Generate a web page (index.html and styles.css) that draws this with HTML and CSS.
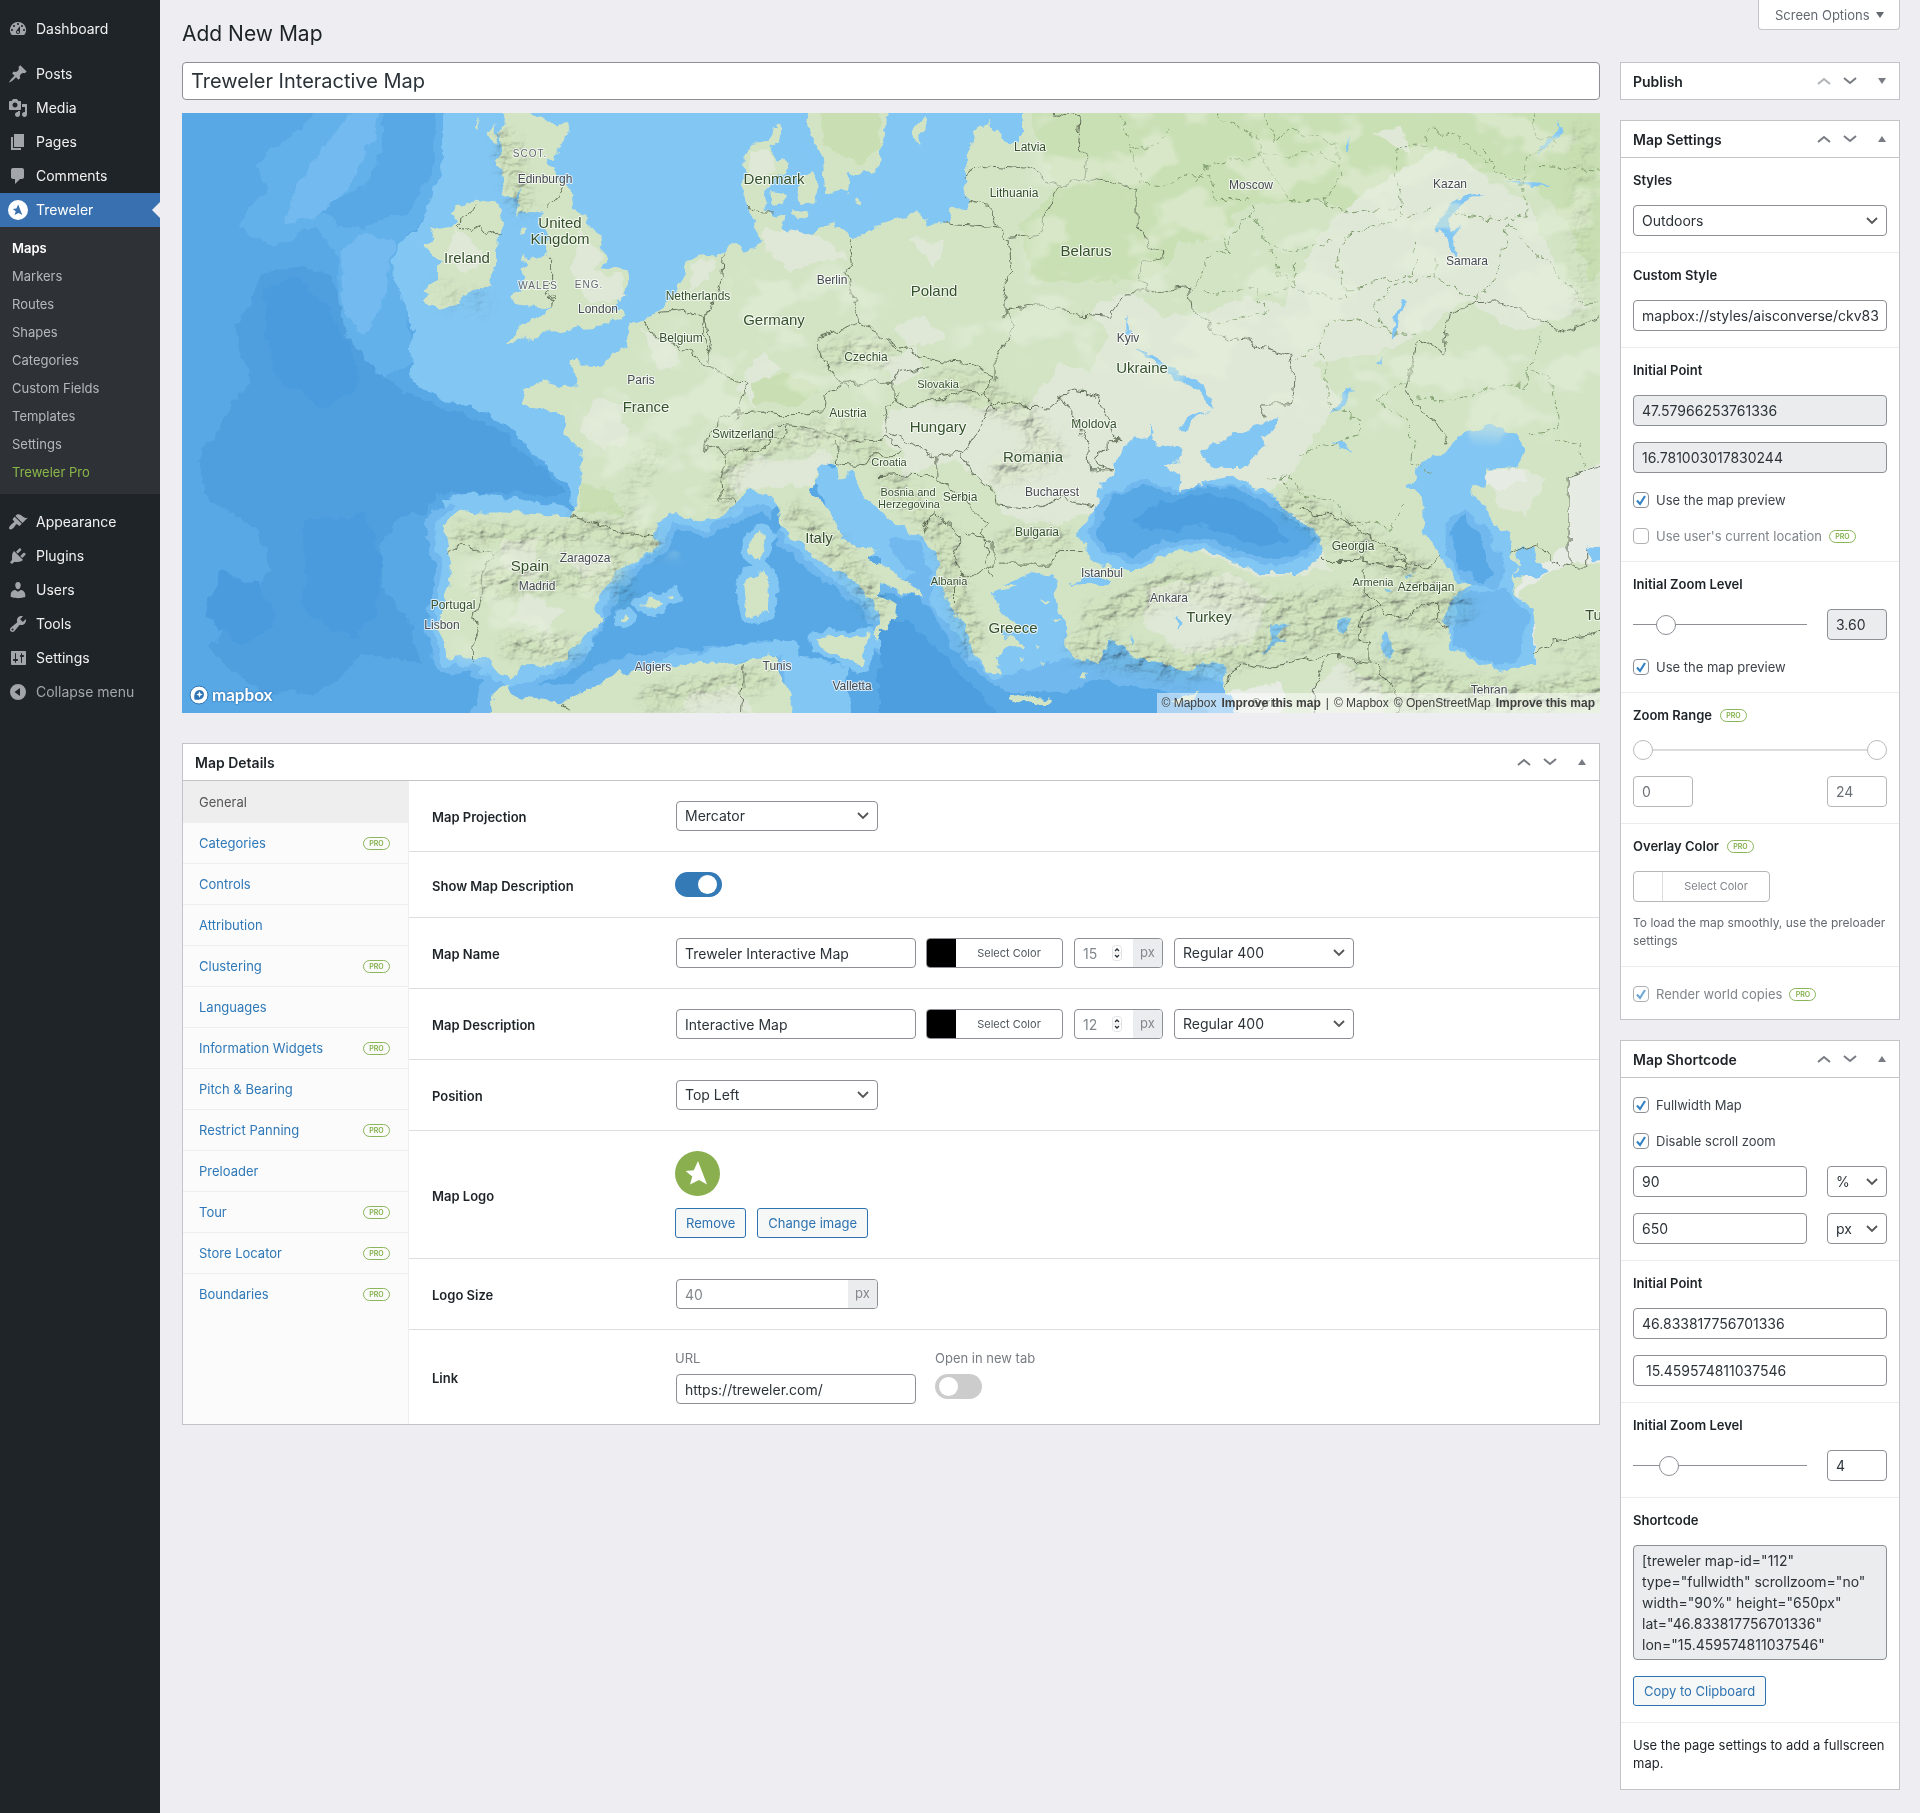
FILE: index.html
```html
<!DOCTYPE html>
<html lang="en">
<head>
<meta charset="utf-8">
<meta name="viewport" content="width=device-width, initial-scale=1">
<title>Add New Map</title>
<link rel="stylesheet" href="styles.css">
</head>
<body>
<svg class="defs" aria-hidden="true">
  <symbol id="up" viewBox="0 0 14 8"><path d="M1 7l6-5 6 5" fill="none" stroke="currentColor" stroke-width="2"/></symbol>
  <symbol id="down" viewBox="0 0 14 8"><path d="M1 1l6 5 6-5" fill="none" stroke="currentColor" stroke-width="2"/></symbol>
  <symbol id="tri-up" viewBox="0 0 8 8"><path d="M4 1l4 6H0z" fill="currentColor"/></symbol>
  <symbol id="tri-down" viewBox="0 0 8 8"><path d="M4 7l4-6H0z" fill="currentColor"/></symbol>
  <symbol id="star" viewBox="0 0 45 45"><path d="M23 10l9 23.5-8-4.5-9 4.5 2.300-8-6.700-5.500 8.200-.7z"/></symbol>
  <symbol id="spin" viewBox="0 0 10 16"><rect x=".5" y=".5" width="9" height="15" rx="3" fill="#fff" stroke="#e2e2e4"/><path d="M1 8h8" stroke="#e2e2e4"/><path d="M3 6l2-2 2 2M3 10l2 2 2-2" fill="none" stroke="#2c3338" stroke-width="1.300"/></symbol>
</svg>
<div class="layout">
  <nav class="menu" aria-label="Main menu">
    <ul class="menu-list">
      <li><a href="#" class="item"><svg viewBox="0 0 20 20"><path d="M3.760 16h12.480A7.998 7.998 0 0 0 10 3a7.998 7.998 0 0 0-6.240 13zM10 4c.55 0 1 .45 1 1s-.45 1-1 1-1-.45-1-1 .45-1 1-1zM6 6c.55 0 1 .45 1 1s-.45 1-1 1-1-.45-1-1 .45-1 1-1zm8 0c.55 0 1 .45 1 1s-.45 1-1 1-1-.45-1-1 .45-1 1-1zm-5.370 5.550L12 7v6c0 1.100-.9 2-2 2s-2-.9-2-2c0-.57.24-1.080.63-1.450zM4 10c.55 0 1 .45 1 1s-.45 1-1 1-1-.45-1-1 .45-1 1-1zm12 0c.55 0 1 .45 1 1s-.45 1-1 1-1-.45-1-1 .45-1 1-1zm-5 3c0-.55-.45-1-1-1s-1 .45-1 1 .45 1 1 1 1-.45 1-1z"/></svg>Dashboard</a></li>
      <li class="split"><a href="#" class="item"><svg viewBox="0 0 20 20"><path d="M10.440 3.020l1.820-1.820 6.360 6.350-1.830 1.820c-1.050-.68-2.480-.57-3.410.36l-.75.75c-.92.93-1.040 2.350-.35 3.410l-1.830 1.820-2.410-2.410-2.800 2.790c-.42.42-3.380 2.710-3.800 2.290s1.860-3.390 2.280-3.810l2.790-2.790L4.100 9.360l1.830-1.820c1.050.69 2.480.57 3.400-.36l.75-.75c.93-.92 1.050-2.350.36-3.410z"/></svg>Posts</a></li>
      <li><a href="#" class="item"><svg viewBox="0 0 20 20"><path d="M13 11V4c0-.55-.45-1-1-1h-1.670L9 1H5L3.670 3H2c-.55 0-1 .45-1 1v7c0 .55.45 1 1 1h10c.55 0 1-.45 1-1zM7 4.500c1.380 0 2.500 1.120 2.500 2.500S8.380 9.500 7 9.500 4.500 8.380 4.500 7 5.620 4.500 7 4.500zM14 6h5v10.500c0 1.380-1.120 2.500-2.500 2.500S14 17.880 14 16.500s1.120-2.500 2.500-2.500c.17 0 .34.02.5.05V9h-3V6zm-4 8.050V13h2v3.500c0 1.380-1.120 2.500-2.500 2.500S7 17.880 7 16.500 8.120 14 9.500 14c.17 0 .34.02.5.05z"/></svg>Media</a></li>
      <li><a href="#" class="item"><svg viewBox="0 0 20 20"><path d="M6 15V2h10v13H6zm-1 1h8v2H3V5h2v11z"/></svg>Pages</a></li>
      <li><a href="#" class="item"><svg viewBox="0 0 20 20"><path d="M5 2h9c1.100 0 2 .9 2 2v7c0 1.100-.9 2-2 2h-2l-5 5v-5H5c-1.100 0-2-.9-2-2V4c0-1.100.9-2 2-2z"/></svg>Comments</a></li>
      <li>
        <a href="#" class="item current"><svg viewBox="0 0 45 45"><circle cx="22.5" cy="22.5" r="22.5" fill="#fff"/><use href="#star" fill="#3a72b0"/></svg>Treweler</a>
        <ul class="submenu">
          <li><a href="#" class="sub-current">Maps</a></li>
          <li><a href="#">Markers</a></li>
          <li><a href="#">Routes</a></li>
          <li><a href="#">Shapes</a></li>
          <li><a href="#">Categories</a></li>
          <li><a href="#">Custom Fields</a></li>
          <li><a href="#">Templates</a></li>
          <li><a href="#">Settings</a></li>
          <li><a href="#" class="sub-pro">Treweler Pro</a></li>
        </ul>
      </li>
      <li class="split"><a href="#" class="item"><svg viewBox="0 0 20 20"><path d="M14.480 11.060L7.410 3.990l1.500-1.500c.5-.56 2.300-.47 3.510.32 1.210.8 1.430 1.280 2.910 2.100 1.180.64 2.450 1.260 4.450.85zm-.71.71L6.700 4.700 4.930 6.470c-.39.39-.39 1.020 0 1.410l1.060 1.060c.39.39.39 1.030 0 1.420-.6.6-1.430 1.110-2.210 1.690-.35.26-.7.53-1.010.84C1.430 14.230.4 16.080 1.400 17.070c.99 1 2.840-.03 4.180-1.360.31-.31.58-.66.85-1.020.57-.78 1.080-1.610 1.690-2.210.39-.39 1.020-.39 1.410 0l1.060 1.060c.39.39 1.020.39 1.410 0z"/></svg>Appearance</a></li>
      <li><a href="#" class="item"><svg viewBox="0 0 20 20"><path d="M13.110 4.360L9.870 7.600 8 5.730l3.240-3.240c.35-.34 1.050-.2 1.560.32.52.51.66 1.210.31 1.550zm-8 1.770l.91-1.120 9.010 9.010-1.190.84c-.71.71-2.630 1.160-3.820 1.160H6.140L4.900 17.260c-.59.59-1.540.59-2.120 0-.59-.58-.59-1.530 0-2.120l1.240-1.240v-3.880c0-1.130.4-3.190 1.090-3.890zm7.260 3.970l3.240-3.240c.34-.35 1.040-.21 1.550.31.52.51.66 1.210.31 1.550l-3.240 3.250z"/></svg>Plugins</a></li>
      <li><a href="#" class="item"><svg viewBox="0 0 20 20"><path d="M10 9.250c-2.270 0-2.730-3.440-2.730-3.440C7 4.020 7.820 2 9.970 2c2.160 0 2.980 2.020 2.710 3.810 0 0-.41 3.440-2.680 3.440zm0 2.570L12.720 10c2.390 0 4.520 2.330 4.520 4.530v2.490s-3.650 1.130-7.240 1.130c-3.650 0-7.240-1.130-7.240-1.130v-2.490c0-2.250 1.940-4.480 4.470-4.480z"/></svg>Users</a></li>
      <li><a href="#" class="item"><svg viewBox="0 0 20 20"><path d="M16.680 9.770c-1.340 1.340-3.300 1.670-4.950.99l-5.410 6.520c-.99.99-2.590.99-3.580 0s-.99-2.590 0-3.570l6.520-5.420c-.68-1.650-.35-3.610.99-4.950 1.280-1.280 3.120-1.620 4.720-1.060l-2.890 2.890 2.820 2.820 2.860-2.870c.53 1.580.18 3.390-1.080 4.650zM3.810 16.210c.4.39 1.040.39 1.430 0 .4-.4.4-1.040 0-1.430-.39-.4-1.030-.4-1.430 0-.39.39-.39 1.030 0 1.430z"/></svg>Tools</a></li>
      <li><a href="#" class="item"><svg viewBox="0 0 20 20"><path d="M18 16V4c0-.55-.45-1-1-1H4c-.55 0-1 .45-1 1v12c0 .55.45 1 1 1h13c.55 0 1-.45 1-1zM8 11h1c.55 0 1 .45 1 1s-.45 1-1 1H8v1.500c0 .28-.22.5-.5.5s-.5-.22-.5-.5V13H6c-.55 0-1-.45-1-1s.45-1 1-1h1V5.500c0-.28.22-.5.5-.5s.5.22.5.5V11zm6-2h-1c-.55 0-1-.45-1-1s.45-1 1-1h0V5.500c0-.28.22-.5.5-.5s.5.22.5.5V7h1c.55 0 1 .45 1 1s-.45 1-1 1h-1v5.500c0 .28-.22.5-.5.5s-.5-.22-.5-.5V9z"/></svg>Settings</a></li>
      <li><button type="button" class="item collapse"><svg viewBox="0 0 20 20"><path fill-rule="evenodd" d="M10 2a8 8 0 1 0 0 16 8 8 0 0 0 0-16zm2 4v8l-5.500-4z"/></svg>Collapse menu</button></li>
    </ul>
  </nav>

  <div class="content">
    <main class="main">
      <h1 class="page-title">Add New Map</h1>
      <input class="title-input" type="text" value="Treweler Interactive Map" aria-label="Map title">

      <div class="map">
        <svg class="map-art" viewBox="0 0 1418 600" preserveAspectRatio="xMidYMid slice" role="img" aria-label="Map of Europe">
          <defs>
            <filter id="rough" filterUnits="userSpaceOnUse" x="-30" y="-30" width="1480" height="660">
              <feTurbulence type="fractalNoise" baseFrequency=".07" numOctaves="3" seed="4" result="n"/>
              <feDisplacementMap in="SourceGraphic" in2="n" scale="13" xChannelSelector="R" yChannelSelector="G"/>
            </filter>
            <filter id="hill" filterUnits="userSpaceOnUse" x="0" y="0" width="1418" height="600">
              <feTurbulence type="fractalNoise" baseFrequency=".06 .09" numOctaves="4" seed="9" result="n"/>
              <feDiffuseLighting in="n" surfaceScale="9" diffuseConstant="1.150" lighting-color="#eef4dc" result="l"><feDistantLight azimuth="225" elevation="55"/></feDiffuseLighting>
              <feGaussianBlur in="SourceAlpha" stdDeviation="6" result="b"/>
              <feComposite in="l" in2="b" operator="in"/>
            </filter>
            <filter id="patch" filterUnits="userSpaceOnUse" x="0" y="0" width="1418" height="600">
              <feTurbulence type="fractalNoise" baseFrequency=".018 .025" numOctaves="3" seed="21" result="n"/>
              <feColorMatrix in="n" type="matrix" values="0 0 0 0 .78  0 0 0 0 .87  0 0 0 0 .7  9 0 0 0 -4.600" result="c"/>
              <feGaussianBlur in="SourceAlpha" stdDeviation="8" result="b"/>
              <feComposite in="c" in2="b" operator="in"/>
            </filter>
            <clipPath id="cl"><path d="M-30-30H698V640H-30z"/></clipPath>
            <clipPath id="cr"><path d="M698-30H1460V640H698z"/></clipPath>
            <path id="uk" d="M700-40L780-40 770 15 800 35 848 40 840 75 815 115 800 135 818 150 830 190 852 205 858 240 875 275 905 305 918 345 928 385 915 410 940 405 975 412 980 440 960 485 940 510 968 520 965 535 930 555 880 560 830 568 790 570 770 598 745 585 725 600 705 608 730 575 745 548 790 530 805 515 760 505 720 485 745 465 755 430 740 412 755 395 745 372 775 385 800 370 805 325 785 290 790 265 760 258 730 270 735 230 745 200 725 225 705 215 712 180 690 140 700 110 695 60 705 30zM640 228L690 235 708 285 690 320 688 400 675 455 630 470 600 495 560 510 530 490 545 470 525 460 560 435 555 400 575 390 545 375 535 350 555 335 540 310 590 300 610 280 590 270 605 240zM672 60l12-20 10 30-8 20zM640 50l8-30v40zM745 300l8 4-6 16-8-4z"/>
            <path id="eu" d="M1310 35L1308 75 1290 95 1300 120 1325 140 1318 160 1290 185 1275 215 1270 250 1290 268 1320 275 1310 300 1325 320 1350 320 1385 315 1410 290 1440 305 1465 330 1490 320 1530 295 1700 275 1700 1060 1560 1050 1525 1030 1490 1000 1480 960 1465 925 1450 955 1435 950 1430 905 1410 900 1380 925 1385 950 1375 985 1400 1010 1425 1050 1440 1100 1475 1130 1520 1135 1500 1150 1530 1175 1700 1190 1700 1240 1545 1225 1560 1305 1540 1340 1515 1365 1505 1350 1525 1320 1515 1265 1490 1250 1480 1220 1440 1190 1400 1165 1370 1140 1330 1095 1310 1070 1305 1020 1270 985 1245 980 1215 1010 1195 1030 1170 1055 1135 1060 1100 1045 1065 1040 1035 1060 1030 1095 1040 1115 1010 1150 950 1180 930 1220 905 1270 905 1290 920 1320 885 1345 865 1380 840 1410 800 1430 745 1430 715 1465 690 1450 675 1420 640 1405 585 1412 580 1370 560 1325 565 1300 585 1240 590 1180 580 1110 570 1070 610 1030 640 1035 700 1035 790 1040 850 1045 865 1000 875 950 873 910 875 870 840 830 835 790 800 770 750 755 740 715 790 700 830 710 862 705 858 670 848 640 870 640 880 660 920 660 945 625 975 600 980 550 1040 520 1075 480 1095 430 1110 385 1180 370 1190 350 1220 350 1230 370 1265 335 1250 300 1235 250 1225 215 1230 110 1245 85 1280 80 1300 40z"/>
            <path id="isl" d="M1360-40L1372 70 1400 130 1405 210 1450 215 1455 170 1510 155 1535 100 1545-40zM1288 208l26 5 4 30-14 8-14-18zM1338 205l14-10-2-25 26-10 16 30-10 25 2 25-28 2zM1335 258l30 2-5 14-24-3zM1470 230l14 4-2 14-10-6zM1412 280l16 8-6 18-14-8zM1270 1080L1274 1130 1260 1160 1242 1140 1240 1105zM1265 1178L1283 1200 1280 1290 1240 1305 1232 1260 1228 1205zM1388 1358L1430 1355 1500 1348 1485 1432 1430 1400 1388 1378zM1005 1270L1032 1252 1047 1268 1035 1286zM1060 1246l16-2 2 10-10 2zM960 1305l12-8 4 10-12 8z"/>
            <path id="af" d="M660 1620L690 1490 715 1480 740 1510 830 1520 880 1500 920 1470 960 1445 1060 1430 1100 1425 1160 1420 1230 1420 1270 1400 1310 1410 1300 1440 1330 1500 1320 1620z"/>
          </defs>
          <g filter="url(#rough)">
            <rect x="-40" y="-40" width="1500" height="690" fill="#58a8e5"/>
            <g clip-path="url(#cl)">
              <g transform="translate(-2 -3) scale(.4592 .389)">
                <path fill="#4f9fdf" d="M180 420L260 400 330 430 370 560 420 650 440 690 560 760 680 810 750 880 800 930 840 990 560 985 540 1040 480 1040 440 1100 440 1240 500 1300 520 1420 400 1400 300 1500 180 1500 60 1380 130 1300 200 1180 170 1080 60 1000 40 900 150 700 120 560z"/>
                <path fill="#64b1ea" d="M330-40L590-40 575 160 520 300 480 340 470 420 490 520 510 640 440 690 370 590 345 500 345 380 300 300 200 350 130 300 190 200 160 140 250 60z"/>
                <path fill="#58a8e5" d="M440-40L560-40 550 150 500 260 400 300 340 300 300 250 400 200 440 100z"/>
                <path fill="#4a9bde" d="M270 1060l130-20 40 110-10 150-60 60-100-70zM180 460l60-30 70 60 60 110 20 110-80 60-110-90zM90 1180l80 40 40 100-80 60-80-90z"/>
                <path fill="#72baef" d="M370 10l60-20-10 90-60 130-60 60-70 20 20-90 60-100zM400 310l65 30-10 110-50 130-50-60-5-150z"/>
                <path fill="#82c6f4" d="M575-40V130L545 230 520 310 470 345 465 420 490 520 505 570 500 690 560 740 640 765 720 820 760 870 800 925 845 960 860 1050 1000 1000 1400 900 1700 800 1700-40zM570 1000l60-15 100 15 110 20 40 60-320-10z"/>
                <g fill="none" stroke-linejoin="round" stroke="#6fb8ee" stroke-width="76"><use href="#af"/></g>
                <g fill="none" stroke-linejoin="round" stroke="#82c6f4"><path stroke="#6fb8ee" stroke-width="70" d="M1305 1020L1270 985 1195 1030 1135 1060 1065 1040 1035 1110 950 1180 905 1280 840 1410 715 1465 640 1405 585 1412 570 1320 590 1180 570 1070 610 1030M1310 1070L1400 1165 1500 1250 1560 1340 1505 1365M1290 1060"/><path stroke-width="36" d="M1305 1020L1270 985 1195 1030 1135 1060 1065 1040 1035 1110 950 1180 905 1280 880 1370 840 1410 715 1465 640 1405 585 1412 570 1320 590 1180 570 1070 610 1030M1310 1070L1400 1165 1500 1250 1560 1340 1505 1365M1030 1430L1330 1380 1340 1560"/><use href="#isl" stroke-width="34"/></g>
                <path fill="#82c6f4" d="M1370 900L1460 920 1580 1040 1580 1160 1440 1130z"/>
                <path fill="#82c6f4" d="M1330 1400L1450 1430 1460 1560H1320z"/>
                <g fill="#d3e4c5"><use href="#uk"/><use href="#eu"/><use href="#isl"/><use href="#af"/></g>
                <g fill="#dfe8d6">
                  <path d="M1200 920L1260 890 1340 905 1410 870 1425 895 1380 925 1380 970 1290 965 1215 985 1195 950zM700 1110L780 1100 770 1160 800 1180 760 1220 700 1170zM750 1240l90 40-40 60-80-30zM840 1150l90-10 20 30-70 40zM900 740l60 20 20 90-60 30-50-60zM1000 560l70 40 20 50-50 20zM870 310l50 60-20 40 60 20 10 50-80 20-40-90zM1270 300l120 20 60 60-120 30-60-50zM1120 400l50-20-20 60-40 20zM1210 720l60-100 40 40-50 100zM1240 100l50 10 10 50-60 20zM1100 1500l120-20 30 70h-160zM600 300l70 80-50 40-40-30z"/>
                </g>
                <path fill="#c9dfb3" d="M875 960l70 20 20 60-100-10zM1390-40h150v130l-60 50-80-50zM1240 700l80-20 80 30-60 50-90-10z"/>
              </g>
            </g>
            <g clip-path="url(#cr)">
              <g transform="translate(698 -3) scale(.4656 .389)">
                <path fill="#d3e4c5" d="M-40-60H1640V1650H-40z"/>
                <path fill="#c9dfb4" d="M300-60H1640V300L1530 440 1480 300 1400 180 1250 150 1130 230 1010 270 960 230 780 240 740 330 640 340 620 400 560 440 330 440 300 300 380 200z"/>
                <g fill="#dfe8d6">
                  <path d="M1190 100l60 20 60 60 80 60 70 180 60 90-150 60-110-80-120 100-90 40-120 20 60 100-50 80-60 120-60 40 90 60 60 130-150 20-130-60-20-100-60 30-80-60-120 40-100-30-90-60-60-60-110 40-20-160 140-20 140 10 80-120 60 20 40-90-40-60 80-60 80 70 110-10 60-40 80 20 90-180 60-80z"/>
                  <path d="M20 770l160-20 50 30-60 90-120 20-50-60zM250 980l170 10 40 20-80 60-120-30zM1300 930l90-10 40 30-40 90-60-20zM570 1230l180-40 90 60-40 120-140 30-90-70zM930 1480l60-60 90 60 10 120-170 10zM1060 60l60-20 20 80zM30 560l60-30 50 60-80 20zM60 330l80 10-20 60zM0 650l80-40 10 60-60 40z"/>
                </g>
                <path fill="#e6ebe4" d="M1480 940l90-40v270l-90-10-80 60-30 20 40 90-5 100-20-110-20-90 40-50 75-60zM1310 925l70 0 10 30-60 20-30-20zM740 1500l120-30 20 60-60 60h-90z"/>
                <g fill="#82c6f4">
                  <path d="M-40-60H305V85L275 92 260 70 235 30 205 50 185 120 185 190 190 250 150 255 140 290 105 300 90 265 45 270-40 310z"/>
                  <path d="M545 845L580 840 610 870 650 875 645 900 610 915 640 940 650 980 700 955 760 935 790 960 840 985 880 1040 930 1080 950 1120 940 1160 890 1190 820 1190 760 1165 700 1130 640 1135 600 1150 560 1180 500 1180 460 1160 440 1120 425 1095 440 1050 465 1020 470 960 500 940 510 890zM695 870L760 840 800 810 855 800 855 815 815 845 830 870 805 890 795 920 740 920 710 915 695 895z"/>
                  <path d="M1310 810L1375 825 1380 880 1365 920 1305 925 1300 970 1270 970 1305 1040 1330 1080 1360 1090 1350 1140 1370 1170 1360 1240 1400 1280 1405 1330 1405 1425 1330 1440 1270 1410 1225 1380 1215 1310 1235 1240 1270 1220 1240 1210 1200 1140 1170 1080 1165 1010 1135 970 1165 905 1220 880 1240 840zM1370 1125L1405 1120 1410 1160 1435 1190 1410 1205 1370 1200zM1520 1120l40 0v40h-30z"/>
                  <path d="M-40 1010L0 1030 40 1065 90 1100 120 1140 125 1200 140 1260 170 1310 195 1350 190 1380 230 1440 255 1450 250 1410 270 1385 290 1370 265 1345 310 1340 260 1290 240 1240 290 1230 270 1215 320 1195 370 1190 385 1215 375 1240 380 1290 400 1330 400 1380 440 1430 480 1450 530 1460 550 1430 600 1460 640 1465 690 1420 740 1425 745 1450 725 1520 725 1620-40 1620zM400 1215l30-5 30-18 40 12-10 16-70 0z"/>
                  <path d="M1195 300l20-50 40-35 45-2-45 20-30 40 0 40 25-10-20 30 10 40-15-5-5-30zM1120 490l12 0-14 30-5 60-12 10 5-60zM1082 630l-6 30-8-4zM1015 710l-15 50-30 20 20-40 8-25zM965 848l25 5 25 24-30-14zM1340 180l70 4 30 12-50-4zM1410 100l30-30 20-40 4 30-30 30-20 25zM1003 60l8 45-8 0zM528 530l10 40-8 10zM545 605l20 10 80 60 40 15 30 60-5 22-20-45-40-25-80-70zM640 830l20-45 50-8-30 15-30 40zM580 800l8 40-8 0zM1078 1350l10-5 15 45-15 20-8-30zM975 1320l45-15-15 25-5 15-20-10zM840 1320l40 5-30 20 20 20-40 30-8 5 20-35zM636 1300l10 20-4 15-8-20zM1130 1190l15 5-5 5zM1085 1230h15v6h-15zM540 1350l8 30h-6z"/>
                </g>
                <path fill="#6fb8ee" d="M470 1000L560 950 640 975 700 960 790 970 850 1000 910 1060 945 1110 920 1150 850 1175 760 1150 700 1115 620 1125 560 1165 480 1140 445 1090zM1215 1060l40-40 50 60 40 110-20 40-60-10-50-80zM1240 1250l100-20 50 60-10 110-60 30-90-60zM20 1090l60 20 30 70 0 100 40 50 40 70 50 60 160-50 70 20 20-70 60 50 120 40 60 20 40 80v100H-40V1240l70-30 40-20-60-70z"/>
                <path fill="#58a8e5" d="M500 990L560 965 640 985 700 965 770 975 840 1015 900 1060 935 1105 915 1140 850 1155 780 1135 700 1100 610 1110 540 1145 490 1130 465 1090zM1225 1080l30-40 40 70 20 80-20 30-50-50zM-40 1230L70 1250 110 1290 150 1370 200 1440 260 1490 400 1500 470 1460 560 1490 640 1500 720 1560 720 1650H-40z"/>
                <path fill="#4d9edf" d="M600 1010l110-25 60 20 60 40 50 60-60 20-130-60-90 20-60-20zM-40 1300l100 10 50 60 60 80 60 60 30 60 0 60H-40z"/>
                <g fill="#d3e4c5">
                  <path d="M-40-60H20L15 60 0 110-40 130zM75 50L98 15 100 40 80 90zM-40 1150L0 1168 60 1210 88 1255 60 1245 30 1230-10 1210-20 1240 10 1255 36 1275 32 1300 10 1340-5 1330-40 1330z"/>
                  <path d="M275 1500l30 0 25 10 45 8-20 12-55-8-25-8zM625 1518l35-12 30-12-20 20-30 14zM330 1370l14 6-10 6zM300 1400l10 6-8 6zM345 1260l20 6-8 10zM370 1310l20 4-10 6zM430 1455l14-14-4 24zM345 1420l8 6-8 4zM280 1355l20 12 10 20-14-6-30-20z"/>
                </g>
              </g>
            </g>
            <g class="borders">
              <g transform="translate(-2 -3) scale(.4592 .389)">
                <path d="M640 240l-10 30-22 20 20 28 25-20 18 25 25-8M830 195l-10 30-20 25M805 375v60l-5 30 15 25-10 25M1185 372l-3 60-10 30-30 80 15 60-10 40M1010 540l15 30 20 20 30 5 10 20 30 5 15 30 40 10 20 30 40 10-5 40-15 60M1045 520l60-5 40 25-10 40 20 40M1235 250l30 12 30 0M1452 330l10 60-12 25 15 60 15 60 0 10-25 10-20 15-50 20 10 45 40 60 20 20M1480 545l40 25 20 20 30 30M1200 778l60-5 40 10 60 0 40-10 5-40 40-30 40-5 60 5M1200 778l-20 20-35 60-5 15 30-10 15 25 20-10 30-10 40 10 10-30 20 0 20-30M1170 860l20 30-15 60 5 50 25 0 5 20M1300 810l60 5 60 20 60 20M1425 850l10 60 60 5 10-25 60-5M850 1045l60 20 60 25 65 12M582 1135l25-15 30 15 40-5 5 25-25 30 0 60-15 60 10 45-15 30 0 40M1228 1425l0 40-5 85M1568 870l-30-40-10 20-40-5M835 1520l15 30"/>
              </g>
              <g transform="translate(698 -3) scale(.4656 .389)">
                <path d="M180 170l40-30 100 10 70 50 50-30 5-40-20-50 5-60-80-20-50-20M440 170l60 15 50 20 0 90 30 50 35 25-15 15-35 10-5 30 15 30-5 15-45 0-35 60-60-5-40-15-70-5-50 10-10 15M185 230l50 15 15 50M130 290l120 10 25 35 10 80-25 40 15 40 0 40 20 20-50 90 0 50M275 330l60-10 20-10 0-50 30-60M575 468l90-15 5 60 50 60 30 20 40-5 30 25 60 20 10 60-10 60-60 0 0 40M0 580l50 30 50 30 40 10 60 5 40 25-10 60 20 30M0 700l30 0 10-25 60-15M30 700l0 40 30 25 60-20 60-20 50 5M250 750l-40 70-30 60-60 10-30-15-70-50-10-60 30-30M250 750l60 15 50 0 30-30 30-10 50 15 20 50 10 50 20 10-30 0 0 20-25 20 5 25 30 10-50 0-5-60-25-75-30-60M120 890l0 60 30 20 45 40 15 40 25 15-20 20 20 40-10 40 15 30M0 940l60-5 50 10M170 880l30 60 45 45 5 30 80 10 60-25 70 15M90 1090l20-60 60 60-10 50 20 60 30-10 35-20 0-60-60-20M260 1170l80 0 30 0 15-40 50 0M180 1190l-20 40 0 40M945 1158l70 0 90 10 30 10-20-40-40-20-70-60-60-20-40-10M1105 1150l40 20 30 10 30-35M1040 1180l0 60 50 60 40 10 30-40 40-5 0 50 20 10M740 1480l30-55 50 10 70-15 80-20 80 15 0-40-20-20 10-60 20-30M970 1400l-35 60 0 90M1060 1420l50 80 0 50M1285 495l50-2 50 25 40 30 45 20 50-20 30-20M1285 495l-60 30-15 100-30-30-30 10-10 60-10 60 30 50 30 20 30 60M1480 1170V940l70-25M1350 1140l60-25 30 40 60 20 20 0 0-50M1405 1395l40-30 80-10 20-10"/>
              </g>
            </g>
            <g class="regions" transform="translate(698 -3) scale(.4656 .389)">
              <path d="M510 10l30 80 20 100 50 5 50-30 50 5 10 60 70 0 10 30-40 60-20 40M545 95l60-10 20-40M690-10l120 80 10 50-60 10-60 20-20 30M820 110l40 10 80-10 50 30M820 110l20 60 40 60 70 5 40-70-10-80-90-30-40 20-30-80M950 235l60 30 110-20M1110 100l60-10 20-40 50 20 60 60M1110 100l0 60 10 80 0 40-60 20-60 20-20 70 20 70 0 30-100-30M970 340l-80 20-60-20-20-60-20-20M840 360l20 60 30 30M740 330l10 30-50 20-10 60-20 20M700 470l100-10 30 60-110 30M830 470l60-10 0-60M1130 280l60-30M1150 340l0 80-100 30-60 10M1190 380l0 50-90 20-40 60 30 60 70 10M1285 490l-90-60M1350 290l-20 120-45 80M1350 290l40 60 60 60 60 90 30-10M1300 100l20 60 60 20 10-60 60-30M1380 180l10 90-100 10-70-20M1420 145l130 10M890 640l50-30 20-60 80-10 60 30M940 610l20 50 0 80 40 40 30 10 0 50-70 20-60 30M1070 740l70-50 0-40M1070 740l60 60 20 50-10 60 40 20M1150 740l80 10 90-40 70 0 0-40 50 20 10 60 10 70-60 10M1395 670l30-100M1450 850l50 10 10 60M830 950l50-10 30 50 60 20 40 50 90 10 30-60M865 935l10 60M1400 10l10 60 50 10"/>
            </g>
          </g>
          <g class="patches" filter="url(#patch)"><path d="M400 290l60-40 70-75 50-20 120-5v170l-130 30-70 90-80-20zM285 425l110 10 50 20-60 80-110 10zM780 190h60l20-200h580v260l-80 80-200-20-300-70-90 0z"/></g>
          <g class="hills" filter="url(#hill)" fill="none" stroke-linecap="round" stroke-linejoin="round">
            <path stroke-width="24" d="M400 412l70 18M280 422l110 5M300 470l110-5M330 532l60 5M430 450l10 30M540 385l10-35 30-20 80-10 30 20M615 400l55 55 25 40M790 280l50 20 30 40-50 20M710 370l50 50 15 60 15 50M825 430l50-5M325 30l15 60M470 585l110-20M650 240l50 0"/>
            <path stroke-width="30" d="M915 505l85-36 90 26 110-6 50 20M900 535l100 20 90-25 90-15M1112 392l45 28 70 35 50 40M1215 540l50 35 80 12 70-15M1180 560l60 30M760 275l40 0"/>
            <path stroke-width="22" opacity=".4" d="M440 400l30-60M1400 20l0 180M1380 540l30 0M260 180l40 10"/>
          </g>
          <g class="labels">
            <g class="l-country">
              <text x="592" y="71">Denmark</text><text x="378" y="115">United</text><text x="378" y="131">Kingdom</text><text x="285" y="150">Ireland</text><text x="592" y="212">Germany</text><text x="464" y="299">France</text><text x="637" y="430">Italy</text><text x="348" y="458">Spain</text><text x="904" y="143">Belarus</text><text x="752" y="183">Poland</text><text x="960" y="260">Ukraine</text><text x="756" y="319">Hungary</text><text x="851" y="349">Romania</text><text x="1027" y="509">Turkey</text><text x="831" y="520">Greece</text><text class="l-start" x="1403" y="507">Tu</text>
            </g>
            <g class="l-mid">
              <text x="516" y="187">Netherlands</text><text x="499" y="229">Belgium</text><text x="684" y="248">Czechia</text><text x="666" y="304">Austria</text><text x="561" y="325">Switzerland</text><text x="271" y="496">Portugal</text><text x="848" y="38">Latvia</text><text x="832" y="84">Lithuania</text><text x="912" y="315">Moldova</text><text x="778" y="388">Serbia</text><text x="855" y="423">Bulgaria</text><text x="1171" y="437">Georgia</text><text x="1244" y="478">Azerbaijan</text><text x="1084" y="594">Syria</text>
            </g>
            <g class="l-small">
              <text x="756" y="275">Slovakia</text><text x="707" y="353">Croatia</text><text x="726" y="383">Bosnia and</text><text x="727" y="395">Herzegovina</text><text x="767" y="472">Albania</text><text x="1191" y="473">Armenia</text>
            </g>
            <g class="l-city">
              <text x="363" y="70">Edinburgh</text><text x="416" y="200">London</text><text x="650" y="171">Berlin</text><text x="459" y="271">Paris</text><text x="403" y="449">Zaragoza</text><text x="355" y="477">Madrid</text><text x="260" y="516">Lisbon</text><text x="471" y="558">Algiers</text><text x="595" y="557">Tunis</text><text x="670" y="577">Valletta</text><text x="1069" y="76">Moscow</text><text x="1268" y="75">Kazan</text><text x="1285" y="152">Samara</text><text x="946" y="229">Kyiv</text><text x="870" y="383">Bucharest</text><text x="920" y="464">Istanbul</text><text x="987" y="489">Ankara</text><text x="1307" y="581">Tehran</text>
            </g>
            <g class="l-region"><text x="348" y="44">SCOT.</text><text x="356" y="176">WALES</text><text x="407" y="175">ENG.</text></g>
          </g>
        </svg>
        <a href="#" class="mapbox-logo"><svg viewBox="0 0 20 20"><circle cx="10" cy="10" r="9" fill="#fff" stroke="#2f75b5" stroke-width="1"/><path d="M5.500 14.500c-.7-3.500 0-6.500 1.500-8a4.600 4.600 0 1 1 6.500 6.500c-1.500 1.500-4.500 2.200-8 1.500z" fill="#2f75b5"/><path d="M10.500 6.300l.9 2.300 2.300.9-2.300.9-.9 2.300-.9-2.300-2.300-.9 2.300-.9z" fill="#fff"/></svg>mapbox</a>
        <div class="attribution"><a href="#">© Mapbox</a><a href="#"><b>Improve this map</b></a><span>|</span><a href="#">© Mapbox</a><a href="#">© OpenStreetMap</a><a href="#"><b>Improve this map</b></a></div>
      </div>

      <section class="panel details">
        <header class="panel-head"><h2>Map Details</h2><button type="button" aria-label="Move up"><svg><use href="#up"/></svg></button><button type="button" aria-label="Move down"><svg><use href="#down"/></svg></button><button type="button" class="fold" aria-label="Toggle panel"><svg><use href="#tri-up"/></svg></button></header>
        <div class="details-body">
          <ul class="tabs">
            <li><a href="#" class="tab tab-on">General</a></li>
            <li><a href="#" class="tab">Categories<span class="pro">PRO</span></a></li>
            <li><a href="#" class="tab">Controls</a></li>
            <li><a href="#" class="tab">Attribution</a></li>
            <li><a href="#" class="tab">Clustering<span class="pro">PRO</span></a></li>
            <li><a href="#" class="tab">Languages</a></li>
            <li><a href="#" class="tab">Information Widgets<span class="pro">PRO</span></a></li>
            <li><a href="#" class="tab">Pitch &amp; Bearing</a></li>
            <li><a href="#" class="tab">Restrict Panning<span class="pro">PRO</span></a></li>
            <li><a href="#" class="tab">Preloader</a></li>
            <li><a href="#" class="tab">Tour<span class="pro">PRO</span></a></li>
            <li><a href="#" class="tab">Store Locator<span class="pro">PRO</span></a></li>
            <li><a href="#" class="tab">Boundaries<span class="pro">PRO</span></a></li>
          </ul>
          <div class="rows">
            <div class="row"><label class="row-label" for="proj">Map Projection</label><select id="proj" class="field w-md"><option>Mercator</option></select></div>
            <div class="row"><label class="row-label" for="desc-on">Show Map Description</label><input id="desc-on" class="toggle" type="checkbox" checked></div>
            <div class="row"><label class="row-label" for="name">Map Name</label>
              <div class="controls"><input id="name" class="field w-lg" type="text" value="Treweler Interactive Map"><button type="button" class="color"><span class="swatch black"></span><span class="color-text">Select Color</span></button><span class="unit w-num"><input type="number" value="15" aria-label="Name size"><svg class="spin"><use href="#spin"/></svg><span class="suffix">px</span></span><select class="field w-sel" aria-label="Name weight"><option>Regular 400</option></select></div></div>
            <div class="row"><label class="row-label" for="desc">Map Description</label>
              <div class="controls"><input id="desc" class="field w-lg" type="text" value="Interactive Map"><button type="button" class="color"><span class="swatch black"></span><span class="color-text">Select Color</span></button><span class="unit w-num"><input type="number" value="12" aria-label="Description size"><svg class="spin"><use href="#spin"/></svg><span class="suffix">px</span></span><select class="field w-sel" aria-label="Description weight"><option>Regular 400</option></select></div></div>
            <div class="row"><label class="row-label" for="pos">Position</label><select id="pos" class="field w-md"><option>Top Left</option></select></div>
            <div class="row"><span class="row-label">Map Logo</span>
              <div class="logo-box"><svg class="logo" viewBox="0 0 45 45"><circle cx="22.5" cy="22.5" r="22.5" fill="#8aaf4e"/><use href="#star" fill="#fff"/></svg><div class="buttons"><button type="button" class="btn">Remove</button><button type="button" class="btn">Change image</button></div></div></div>
            <div class="row"><label class="row-label" for="size">Logo Size</label><span class="unit w-md"><input id="size" type="text" value="40"><span class="suffix">px</span></span></div>
            <div class="row"><span class="row-label">Link</span>
              <div class="link-box"><div class="stack w-lg"><label for="url">URL</label><input id="url" class="field" type="text" value="https://treweler.com/"></div><div class="stack"><label for="newtab">Open in new tab</label><input id="newtab" class="toggle" type="checkbox"></div></div></div>
          </div>
        </div>
      </section>
    </main>

    <aside class="side">
      <button type="button" class="screen-options">Screen Options<svg><use href="#tri-down"/></svg></button>

      <section class="panel">
        <header class="panel-head closed"><h2>Publish</h2><button type="button" class="dim" aria-label="Move up"><svg><use href="#up"/></svg></button><button type="button" aria-label="Move down"><svg><use href="#down"/></svg></button><button type="button" class="fold" aria-label="Toggle panel"><svg><use href="#tri-down"/></svg></button></header>
      </section>

      <section class="panel">
        <header class="panel-head"><h2>Map Settings</h2><button type="button" aria-label="Move up"><svg><use href="#up"/></svg></button><button type="button" aria-label="Move down"><svg><use href="#down"/></svg></button><button type="button" class="fold" aria-label="Toggle panel"><svg><use href="#tri-up"/></svg></button></header>
        <div class="group"><label class="group-title" for="styles">Styles</label><select id="styles" class="field"><option>Outdoors</option></select></div>
        <div class="group"><label class="group-title" for="custom">Custom Style</label><input id="custom" class="field" type="text" value="mapbox://styles/aisconverse/ckv83nl"></div>
        <div class="group"><label class="group-title" for="lat">Initial Point</label><input id="lat" class="field" type="text" readonly value="47.57966253761336"><input class="field" type="text" readonly value="16.781003017830244" aria-label="Longitude"><label class="check"><input type="checkbox" checked>Use the map preview</label><label class="check faded"><input type="checkbox">Use user's current location<span class="pro">PRO</span></label></div>
        <div class="group"><label class="group-title" for="zoom">Initial Zoom Level</label><div class="pair"><input id="zoom" class="range" type="range" min="0" max="24" step="0.1" value="3.6"><input class="field w-xs" type="text" readonly value="3.60" aria-label="Zoom value"></div><label class="check"><input type="checkbox" checked>Use the map preview</label></div>
        <div class="group"><span class="group-title">Zoom Range<span class="pro">PRO</span></span><div class="double"><input class="range" type="range" min="0" max="24" value="0" aria-label="Minimum zoom"><input class="range" type="range" min="0" max="24" value="24" aria-label="Maximum zoom"></div><div class="pair ends"><input class="field w-xs pale" type="text" value="0" aria-label="Minimum"><input class="field w-xs pale" type="text" value="24" aria-label="Maximum"></div></div>
        <div class="group"><span class="group-title">Overlay Color<span class="pro">PRO</span></span><button type="button" class="color pale"><span class="swatch"></span><span class="color-text">Select Color</span></button><p class="hint">To load the map smoothly, use the preloader settings</p></div>
        <div class="group untitled"><label class="check faded"><input type="checkbox" checked>Render world copies<span class="pro">PRO</span></label></div>
      </section>

      <section class="panel">
        <header class="panel-head"><h2>Map Shortcode</h2><button type="button" aria-label="Move up"><svg><use href="#up"/></svg></button><button type="button" aria-label="Move down"><svg><use href="#down"/></svg></button><button type="button" class="fold" aria-label="Toggle panel"><svg><use href="#tri-up"/></svg></button></header>
        <div class="group untitled"><label class="check"><input type="checkbox" checked>Fullwidth Map</label><label class="check"><input type="checkbox" checked>Disable scroll zoom</label><div class="pair"><input class="field" type="text" value="90" aria-label="Width"><select class="field w-xs" aria-label="Width unit"><option>%</option></select></div><div class="pair"><input class="field" type="text" value="650" aria-label="Height"><select class="field w-xs" aria-label="Height unit"><option>px</option></select></div></div>
        <div class="group"><label class="group-title" for="lat2">Initial Point</label><input id="lat2" class="field" type="text" value="46.833817756701336"><input class="field" type="text" value=" 15.459574811037546" aria-label="Longitude"></div>
        <div class="group"><label class="group-title" for="zoom2">Initial Zoom Level</label><div class="pair"><input id="zoom2" class="range" type="range" min="0" max="24" step="0.1" value="4"><input class="field w-xs" type="text" value="4" aria-label="Zoom value"></div></div>
        <div class="group"><label class="group-title" for="code">Shortcode</label><textarea id="code" class="code" rows="5" readonly>[treweler map-id="112" type="fullwidth" scrollzoom="no" width="90%" height="650px" lat="46.833817756701336" lon="15.459574811037546"</textarea><button type="button" class="btn">Copy to Clipboard</button></div>
        <p class="note">Use the page settings to add a fullscreen map.</p>
      </section>
    </aside>
  </div>
</div>
</body>
</html>
```
FILE: styles.css
```css
* { box-sizing: border-box; }
body { margin: 0; background: #eeedf2; color: #1d2327; font: 13px/18px Inter, "Liberation Sans", sans-serif; }
ul { list-style: none; margin: 0; padding: 0; }
h1, h2, p { margin: 0; }
a { text-decoration: none; color: #2e78b7; }
button, input, select, textarea { font: inherit; color: inherit; margin: 0; }
button { background: none; border: 0; padding: 0; cursor: pointer; }
.defs { display: none; }

.layout { display: flex; min-height: 100vh; }
.menu { flex: 0 0 160px; background: #1f2428; padding-top: 12px; }
.item { position: relative; display: flex; align-items: center; gap: 8px; width: 100%; height: 34px; padding-left: 8px; color: #f0f0f1; font-size: 14px; }
.item svg { width: 20px; height: 20px; fill: #a2a6aa; flex: none; }
.split { margin-top: 11px; }
.current { background: #3870b0; color: #fff; }
.current::after { content: ""; position: absolute; right: 0; top: 9px; border: 8px solid transparent; border-left: 0; border-right-color: #eeedf2; }
.collapse { color: #a2a6aa; }
.submenu { background: #2e3237; padding: 7px 0 8px; }
.submenu a { display: block; padding-left: 12px; font-size: 13px; line-height: 28px; color: #b4b8bc; }
.submenu .sub-current { color: #fff; font-weight: 600; }
.submenu .sub-pro { color: #8ab648; }

.content { flex: 1; min-width: 0; display: flex; align-items: flex-start; gap: 20px; padding: 0 20px 23px 22px; }
.main { flex: 1; min-width: 0; }
.side { flex: 0 0 280px; display: flex; flex-direction: column; gap: 20px; }

.page-title { font-size: 21px; font-weight: 400; line-height: 30px; padding: 19px 0 13px; }
.title-input { display: block; width: 100%; height: 38px; padding: 0 8px; border: 1px solid #8c8f94; border-radius: 4px; background: #fff; color: #2c3338; font-size: 20px; }

.map { position: relative; height: 600px; margin: 13px 0 30px; overflow: hidden; background: #58a8e5; }
.map-art { display: block; width: 100%; height: 100%; }
.borders path { fill: none; stroke: #66735c; stroke-width: 1px; vector-effect: non-scaling-stroke; stroke-linejoin: round; }
.regions path { fill: none; stroke: #7f9e6c; stroke-width: 1px; stroke-dasharray: 5 3; vector-effect: non-scaling-stroke; }
.hills { mix-blend-mode: multiply; opacity: .36; stroke: #000; }
.patches { opacity: .5; }
.labels { font-family: "Liberation Sans", Arial, sans-serif; text-anchor: middle; paint-order: stroke; stroke: rgba(255, 255, 255, .75); stroke-width: 2px; stroke-linejoin: round; }
.l-country { font-size: 15px; fill: #33502a; }
.l-start { text-anchor: start; }
.l-mid { font-size: 12px; fill: #33502a; }
.l-small { font-size: 11px; fill: #33502a; }
.l-city { font-size: 12px; fill: #444a50; }
.l-region { font-size: 10px; fill: #5f666c; letter-spacing: 1px; }
.mapbox-logo { position: absolute; left: 7px; bottom: 8px; display: flex; align-items: center; gap: 3px; color: #fff; font: 700 17px/20px Lato, sans-serif; text-shadow: 0 0 2px #2f75b5, 0 0 2px #2f75b5; }
.mapbox-logo svg { width: 20px; height: 20px; }
.attribution { position: absolute; right: 0; bottom: 0; display: flex; gap: 5px; padding: 0 5px; background: rgba(255, 255, 255, .5); color: #404040; font: 12px/20px "Liberation Sans", Arial, sans-serif; }
.attribution a { color: #404040; }

.panel { background: #fff; border: 1px solid #c3c4c7; }
.panel-head { display: flex; align-items: center; height: 37px; padding: 0 13px 0 12px; border-bottom: 1px solid #c3c4c7; }
.panel-head.closed { height: 36px; border-bottom: 0; }
.panel-head h2 { flex: 1; padding-top: 2px; font-size: 14px; font-weight: 600; line-height: 20px; }
.panel-head button { display: flex; margin-left: 12px; color: #787c82; }
.panel-head svg { width: 14px; height: 8px; }
.panel-head .dim { color: #b0b3b6; }
.panel-head .fold { margin-left: 21px; }
.panel-head .fold svg { width: 8px; }

.pro { flex: none; width: 27px; height: 13px; border: 1px solid #8ab55a; border-radius: 7px; color: #7fae45; font-size: 7px; font-weight: 600; line-height: 11px; text-align: center; }
.details-body { display: flex; }
.tabs { flex: 0 0 226px; background: #fbfbfb; border-right: 1px solid #eee; }
.tabs li { border-bottom: 1px solid #eee; }
.tabs li:last-child { border-bottom: 0; }
.tab { display: flex; align-items: center; justify-content: space-between; height: 40px; padding: 0 18px 0 16px; }
.tab-on { height: 41px; background: #eee; color: #555; }
.rows { flex: 1; min-width: 0; }
.row { display: flex; align-items: center; padding: 20px 23px; border-bottom: 1px solid #dcdde1; }
.row:last-child { border-bottom: 0; }
.row-label { flex: 0 0 243px; padding-top: 2px; font-weight: 600; }
.controls { display: flex; align-items: center; gap: 10px; }

.field { display: block; width: 100%; height: 31px; padding: 0 8px; border: 1px solid #8c8f94; border-radius: 4px; background: #fff; color: #2c3338; font-size: 14px; }
.rows .field { height: 30px; margin-left: 1px; }
select.field { appearance: none; background: #fff url("data:image/svg+xml,%3Csvg xmlns='http://www.w3.org/2000/svg' width='12' height='8'%3E%3Cpath d='M1 1l5 5 5-5' fill='none' stroke='%23555' stroke-width='1.8'/%3E%3C/svg%3E") no-repeat right 8px center; }
.field[readonly] { background: #ebecee; }
.field.w-md, .w-md { width: 202px; }
.field.w-lg, .w-lg { width: 240px; }
.field.w-sel { width: 180px; }
.field.w-xs { width: 60px; flex: none; }
.pale { border-color: #b4b6b9; color: #6c7177; }
.color { display: flex; width: 137px; height: 30px; overflow: hidden; border: 1px solid #8c8f94; border-radius: 4px; background: #fff; color: #50575e; font-size: 11px; line-height: 28px; }
.swatch { width: 29px; align-self: stretch; border-right: 1px solid #dcdcde; }
.black { background: #000; border-color: #000; }
.color-text { flex: 1; text-align: center; }
.color.pale { height: 31px; border-color: #b4b6b9; color: #80858a; }
.unit { display: flex; align-items: center; height: 30px; margin-left: 1px; overflow: hidden; border: 1px solid #8c8f94; border-radius: 4px; background: #fff; color: #83888d; }
.unit input { flex: 1; min-width: 0; height: 28px; padding: 0 0 0 8px; border: 0; background: none; font-size: 14px; appearance: textfield; }
.unit input::-webkit-inner-spin-button { display: none; }
.w-num { width: 89px; }
.spin { width: 10px; height: 16px; margin-right: 11px; flex: none; }
.suffix { flex: 0 0 29px; align-self: stretch; background: #ebecee; text-align: center; line-height: 27px; }
.toggle { appearance: none; width: 47px; height: 25px; border-radius: 13px; background: #ccc; }
.toggle::before { content: ""; display: block; width: 19px; height: 19px; margin: 3px 4px; border-radius: 50%; background: #fff; }
.toggle:checked { background: #337ab7; }
.toggle:checked::before { margin-left: 23px; }
.logo-box { display: flex; flex-direction: column; gap: 12px; }
.logo { width: 45px; height: 45px; }
.buttons { display: flex; gap: 11px; }
.btn { height: 30px; padding: 0 10px; border: 1px solid #2e73b0; border-radius: 3px; background: #f6f7f7; color: #2e73b0; }
.link-box { display: flex; gap: 20px; }
.stack label { display: block; height: 24px; line-height: 16px; color: #787c82; }
.stack .toggle { display: block; }

.screen-options { align-self: flex-end; display: flex; align-items: center; gap: 6px; width: 142px; height: 30px; margin-bottom: 12px; padding: 0 16px; border: 1px solid #c3c4c7; border-top: 0; border-radius: 0 0 4px 4px; background: #fff; color: #646970; white-space: nowrap; }
.screen-options svg { width: 8px; height: 8px; flex: none; }

.group { display: flex; flex-direction: column; align-items: flex-start; gap: 16px; padding: 13px 12px 16px; border-bottom: 1px solid #ececef; }
.group:last-child { border-bottom: 0; }
.group.untitled { padding-top: 16px; }
.group-title { display: flex; align-items: center; gap: 8px; font-weight: 600; }
.check { display: flex; align-items: center; gap: 7px; height: 20px; padding-top: 2px; color: #3c434a; white-space: nowrap; }
.check input { appearance: none; width: 16px; height: 16px; border: 1px solid #8c8f94; border-radius: 4px; background: #fff; }
.check input:checked { background: url("data:image/svg+xml,%3Csvg xmlns='http://www.w3.org/2000/svg' width='14' height='14'%3E%3Cpath d='M3 7.5l3 3.5 5-8' fill='none' stroke='%233582c4' stroke-width='2.2'/%3E%3C/svg%3E") no-repeat center; }
.faded { color: #80858a; }
.faded input { opacity: .7; }
.pair { display: flex; align-items: center; gap: 20px; width: 100%; }
.ends { justify-content: space-between; }
.range { appearance: none; display: block; flex: 1; width: 100%; min-width: 0; height: 20px; background: linear-gradient(#8c8f94, #8c8f94) no-repeat center / 100% 1px; }
.range::-webkit-slider-thumb { appearance: none; width: 20px; height: 20px; border: 1px solid #8c8f94; border-radius: 50%; background: #fff; }
.double { display: grid; width: 100%; }
.double .range { grid-area: 1 / 1; background: none; pointer-events: none; }
.double .range:first-child { background: linear-gradient(#dcdcde, #dcdcde) no-repeat center / 100% 2px; }
.double .range::-webkit-slider-thumb { border-color: #b8babd; pointer-events: auto; }
.hint { margin-top: -4px; color: #646970; font-size: 12px; }
.code { display: block; width: 100%; height: 115px; padding: 4px 8px; border: 1px solid #8c8f94; border-radius: 4px; background: #ebecee; color: #2c3338; font-size: 14px; line-height: 21px; resize: none; overflow: hidden; }
.note { padding: 13px 12px 17px; }
```
